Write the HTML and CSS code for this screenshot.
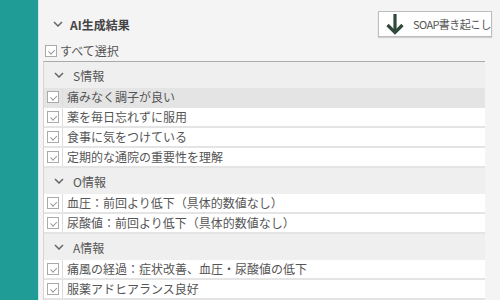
FILE: index.html
```html
<!DOCTYPE html>
<html lang="ja">
<head>
    <meta charset="UTF-8">
    <meta name="viewport" content="width=device-width, initial-scale=1.0">
    <title>AI生成結果</title>
    <link rel="stylesheet" href="styles.css">
</head>
<body>
    <div class="sidebar"></div>
    <div class="main">
        <div class="header">
            <div class="title">
                <svg class="chevron" width="10" height="6" viewBox="0 0 10 6"><path d="M1 1 L5 5 L9 1" fill="none" stroke="#666" stroke-width="1.5"/></svg>
                <span>AI生成結果</span>
            </div>
            <button type="button" class="soap-btn">
                <svg width="18" height="22" viewBox="0 0 18 22"><path d="M9 1 V19" stroke="#2f4a3b" stroke-width="3.2" fill="none"/><path d="M1.5 12 L9 19.5 L16.5 12" stroke="#2f4a3b" stroke-width="3.2" fill="none"/></svg>
                <span>SOAP書き起こし</span>
            </button>
        </div>

        <label class="select-all"><span class="check"></span>すべて選択</label>

        <div class="list">
            <div class="section">
                <svg class="chevron" width="10" height="6" viewBox="0 0 10 6"><path d="M1 1 L5 5 L9 1" fill="none" stroke="#666" stroke-width="1.5"/></svg>
                <span>S情報</span>
            </div>
            <div class="row active"><div class="cell-check"><span class="check"></span></div><div class="cell-text">痛みなく調子が良い</div></div>
            <div class="row"><div class="cell-check"><span class="check"></span></div><div class="cell-text">薬を毎日忘れずに服用</div></div>
            <div class="row"><div class="cell-check"><span class="check"></span></div><div class="cell-text">食事に気をつけている</div></div>
            <div class="row"><div class="cell-check"><span class="check"></span></div><div class="cell-text">定期的な通院の重要性を理解</div></div>

            <div class="section">
                <svg class="chevron" width="10" height="6" viewBox="0 0 10 6"><path d="M1 1 L5 5 L9 1" fill="none" stroke="#666" stroke-width="1.5"/></svg>
                <span>O情報</span>
            </div>
            <div class="row"><div class="cell-check"><span class="check"></span></div><div class="cell-text">血圧：前回より低下（具体的数値なし）</div></div>
            <div class="row"><div class="cell-check"><span class="check"></span></div><div class="cell-text">尿酸値：前回より低下（具体的数値なし）</div></div>

            <div class="section">
                <svg class="chevron" width="10" height="6" viewBox="0 0 10 6"><path d="M1 1 L5 5 L9 1" fill="none" stroke="#666" stroke-width="1.5"/></svg>
                <span>A情報</span>
            </div>
            <div class="row"><div class="cell-check"><span class="check"></span></div><div class="cell-text">痛風の経過：症状改善、血圧・尿酸値の低下</div></div>
            <div class="row"><div class="cell-check"><span class="check"></span></div><div class="cell-text">服薬アドヒアランス良好</div></div>
        </div>
    </div>
</body>
</html>
```

FILE: styles.css
```css
body {
    margin: 0;
    height: 300px;
    overflow: hidden;
    display: flex;
    background: #f4f4f4;
    font-family: "Noto Sans CJK JP", "Noto Sans", sans-serif;
    color: #555;
}

.sidebar {
    width: 38px;
    flex-shrink: 0;
    background: #1f9c95;
    border-right: 1px solid #cfe6e4;
}

.main {
    flex: 1;
    min-width: 0;
    padding: 11px 8px 0 4px;
}

.header {
    display: flex;
    align-items: center;
    justify-content: space-between;
    height: 26px;
}

.title {
    display: flex;
    align-items: center;
    padding-left: 10px;
    font-size: 12px;
    font-weight: bold;
    color: #444;
}

.title .chevron {
    margin-right: 7px;
}

.soap-btn {
    display: flex;
    align-items: center;
    width: 114px;
    height: 26px;
    padding: 0 0 0 7px;
    background: #fff;
    border: 1px solid #bdbdbd;
    box-shadow: 0 1px 1px rgba(0, 0, 0, 0.15);
    font-family: inherit;
    font-size: 11px;
    letter-spacing: -0.6px;
    white-space: nowrap;
    color: #555;
    cursor: pointer;
}

.soap-btn svg {
    flex-shrink: 0;
    margin-right: 9px;
}

.select-all {
    display: flex;
    align-items: center;
    height: 16px;
    margin: 6px 0 2px 2px;
    font-size: 12px;
    line-height: 16px;
}

.select-all .check {
    margin-right: 3px;
}

.check {
    position: relative;
    display: inline-block;
    width: 10px;
    height: 10px;
    border: 1px solid #aaa;
    background: #fff;
}

.check::after {
    content: "";
    position: absolute;
    left: 2px;
    top: 1px;
    width: 5px;
    height: 3px;
    border-left: 1px solid #999;
    border-bottom: 1px solid #999;
    transform: rotate(-45deg) translate(-1px, 2px);
}

.list {
    margin-right: 7px;
    border-top: 1px solid #aaa;
    border-left: 1px solid #d6d6d6;
}

.section {
    display: flex;
    align-items: center;
    height: 26px;
    padding-left: 10px;
    background: #efefef;
    font-size: 12px;
}

.section .chevron {
    margin-right: 9px;
}

.row {
    display: flex;
    height: 18px;
    background: #fff;
    border-bottom: 2px solid #e4e4e4;
    font-size: 12px;
    line-height: 18px;
}

.row.active {
    background: #e4e4e4;
}

.cell-check {
    display: flex;
    align-items: center;
    justify-content: center;
    width: 18px;
    border-right: 1px solid #dcdcdc;
}

.cell-text {
    padding-left: 4px;
    white-space: nowrap;
    overflow: hidden;
}
```
